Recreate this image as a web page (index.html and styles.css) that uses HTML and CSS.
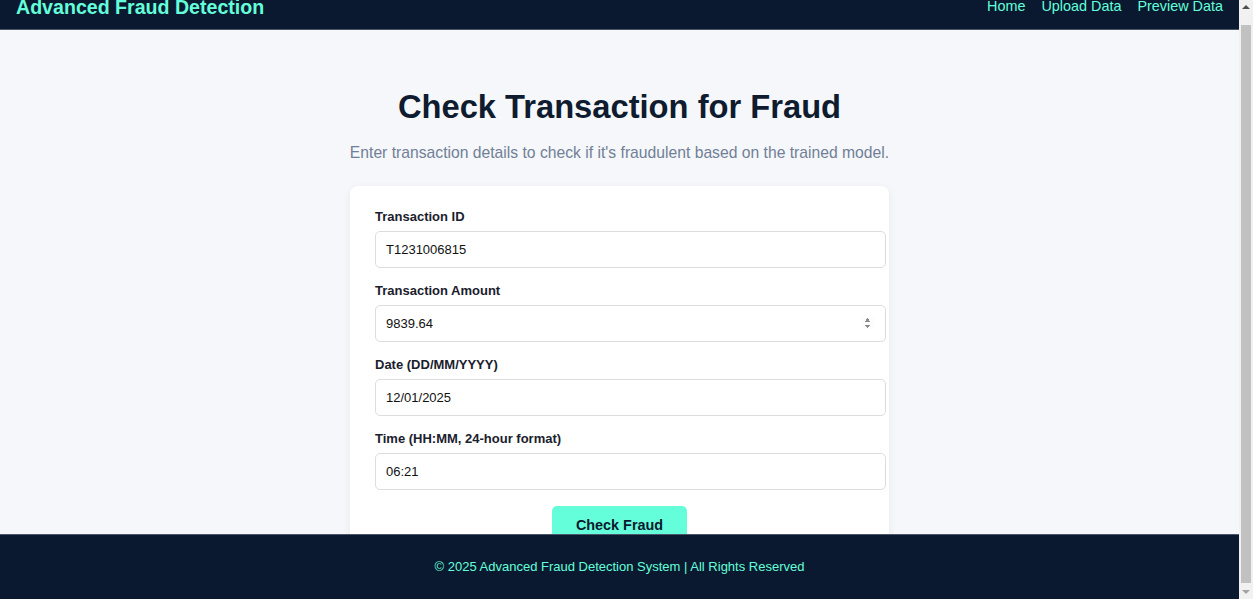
FILE: index.html
```html
<!DOCTYPE html>
<html lang="en">
<head>
<meta charset="utf-8">
<title>Advanced Fraud Detection</title>
<link rel="stylesheet" href="styles.css">
</head>
<body>
<header class="site-header">
  <div class="brand">Advanced Fraud Detection</div>
  <nav class="nav">
    <a href="#" class="nav-link">Home</a>
    <a href="#" class="nav-link">Upload Data</a>
    <a href="#" class="nav-link">Preview Data</a>
  </nav>
</header>
<main class="main">
  <h1 class="title">Check Transaction for Fraud</h1>
  <p class="subtitle">Enter transaction details to check if it's fraudulent based on the trained model.</p>
  <form class="card">
    <div class="group">
      <label class="label" for="tid">Transaction ID</label>
      <input class="input" id="tid" type="text" value="T1231006815">
    </div>
    <div class="group">
      <label class="label" for="amt">Transaction Amount</label>
      <input class="input" id="amt" type="number" step="0.01" value="9839.64">
    </div>
    <div class="group">
      <label class="label" for="date">Date (DD/MM/YYYY)</label>
      <input class="input" id="date" type="text" value="12/01/2025">
    </div>
    <div class="group">
      <label class="label" for="time">Time (HH:MM, 24-hour format)</label>
      <input class="input" id="time" type="text" value="06:21">
    </div>
    <div class="actions">
      <button class="btn" type="button">Check Fraud</button>
    </div>
  </form>
</main>
<footer class="site-footer">
  <p class="footer-text">© 2025 Advanced Fraud Detection System | All Rights Reserved</p>
</footer>
<div class="scrollbar" aria-hidden="true">
  <div class="sb-arrow sb-up"></div>
  <div class="sb-track"><div class="sb-thumb"></div></div>
  <div class="sb-arrow sb-down"></div>
</div>
<script src="script.js"></script>
</body>
</html>
```

FILE: styles.css
```css
html, body {
  margin: 0;
  padding: 0;
}
body {
  background: #f5f7fa;
  font-family: "Liberation Sans", Arial, sans-serif;
  color: #0a192f;
  padding-right: 14px;
}
.site-header {
  display: flex;
  justify-content: space-between;
  align-items: center;
  background: #0a192f;
  padding: 10px 16px 10px 16px;
  border-bottom: 1px solid #4a5568;
}
.brand {
  color: #64ffda;
  font-size: 19.6px;
  line-height: 23px;
  font-weight: bold;
}
.nav {
  display: flex;
  gap: 16px;
  padding-bottom: 3px;
}
.nav-link {
  color: #64ffda;
  text-decoration: none;
  font-size: 14.4px;
}
.main {
  display: flex;
  flex-direction: column;
  align-items: center;
  padding: 58px 20px 80px;
}
.title {
  margin: 0;
  font-size: 32.7px;
  line-height: 38px;
  font-weight: bold;
  color: #0f1b2e;
}
.subtitle {
  margin: 18px 0 24px;
  font-size: 15.7px;
  line-height: 18px;
  color: #718096;
}
.card {
  box-sizing: border-box;
  width: 539px;
  background: #ffffff;
  border-radius: 8px;
  padding: 23px 25px 25px;
  box-shadow: 0 2px 8px rgba(0, 0, 0, 0.06);
}
.group {
  margin-bottom: 15px;
}
.label {
  display: block;
  font-size: 13px;
  line-height: 16px;
  font-weight: bold;
  color: #1a202c;
  margin-bottom: 6px;
}
.input {
  width: 100%;
  padding: 10px;
  font-size: 13px;
  line-height: 15px;
  font-family: "Liberation Sans", Arial, sans-serif;
  color: #111111;
  border: 1px solid #dddddd;
  border-radius: 5px;
  background: #ffffff;
}
.input[type=number]::-webkit-inner-spin-button {
  opacity: 1;
  transform: scale(0.8);
}
.actions {
  display: flex;
  justify-content: center;
  padding-top: 1px;
}
.btn {
  background: #64ffda;
  color: #0a192f;
  border: none;
  border-radius: 5px;
  padding: 11px 24px;
  font-size: 14.4px;
  font-weight: bold;
  font-family: "Liberation Sans", Arial, sans-serif;
}
.site-footer {
  position: fixed;
  left: 0;
  right: 14px;
  bottom: 0;
  height: 65px;
  background: #0a192f;
  border-top: 1px solid #4a5568;
  display: flex;
  align-items: center;
  justify-content: center;
  box-sizing: border-box;
}
.footer-text {
  margin: 0 0 2px;
  color: #64ffda;
  font-size: 13px;
}
.scrollbar {
  position: fixed;
  top: 0;
  right: 0;
  bottom: 0;
  width: 14px;
  background: #f1f1f1;
  display: flex;
  flex-direction: column;
}
.sb-arrow {
  height: 14px;
  display: flex;
  align-items: center;
  justify-content: center;
}
.sb-up::before,
.sb-down::before {
  content: "";
  width: 0;
  height: 0;
  border-left: 4px solid transparent;
  border-right: 4px solid transparent;
}
.sb-up::before {
  border-bottom: 4px solid #505050;
}
.sb-down::before {
  border-top: 4px solid #a3a3a3;
}
.sb-track {
  flex: 1;
  padding: 11px 2px 2px;
  display: flex;
}
.sb-thumb {
  flex: 1;
  background: #c1c1c1;
}
```

FILE: script.js
```js
window.scrollTo(0, 14);
```
